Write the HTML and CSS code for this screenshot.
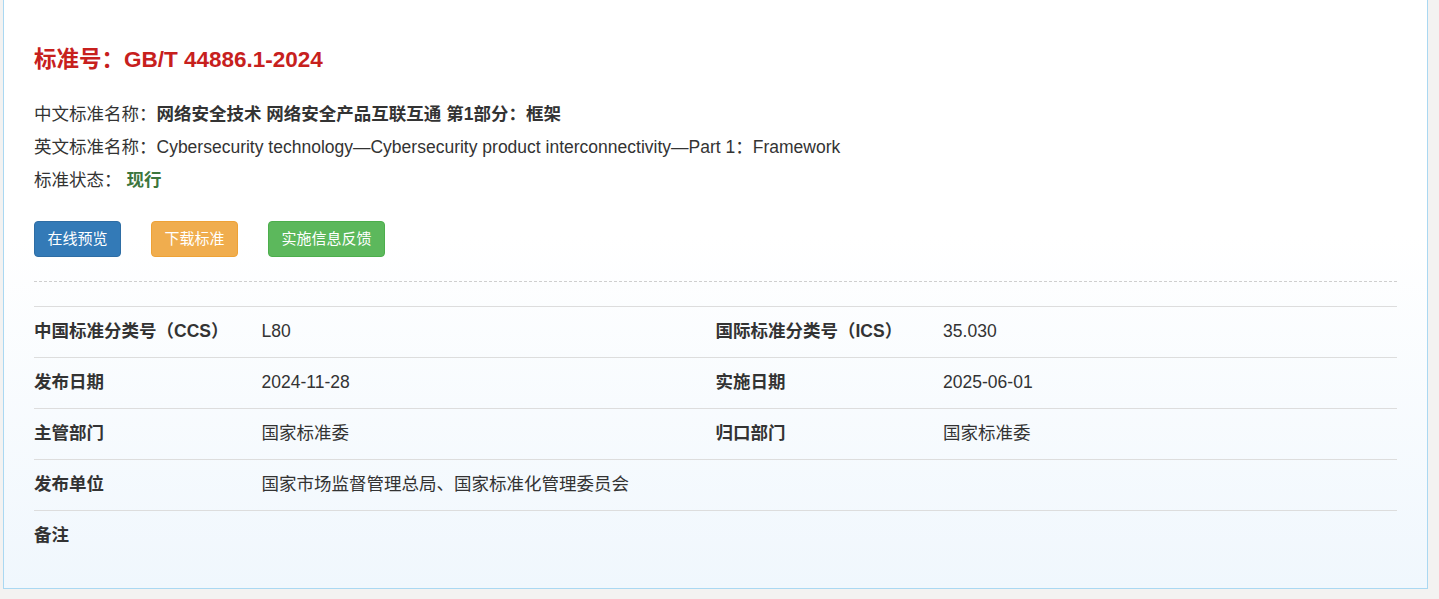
FILE: index.html
```html
<!DOCTYPE html>
<html lang="zh-CN">
<head>
<meta charset="utf-8">
<title>GB/T 44886.1-2024</title>
<link rel="stylesheet" href="styles.css">
</head>
<body>
<div class="page">
  <div class="panel">
    <h1 class="title">标准号：GB/T 44886.1-2024</h1>
    <div class="info">
      <div class="info-line">中文标准名称：<strong>网络安全技术 网络安全产品互联互通 第1部分：框架</strong></div>
      <div class="info-line">英文标准名称：Cybersecurity technology—Cybersecurity product interconnectivity—Part 1：Framework</div>
      <div class="info-line">标准状态：<span class="status">现行</span></div>
    </div>
    <div class="actions">
      <a class="btn btn-primary" href="#">在线预览</a>
      <a class="btn btn-warning" href="#">下载标准</a>
      <a class="btn btn-success" href="#">实施信息反馈</a>
    </div>
    <div class="divider"></div>
    <table class="detail">
      <colgroup>
        <col class="c-label"><col class="c-value"><col class="c-label"><col class="c-value">
      </colgroup>
      <tbody>
        <tr><th>中国标准分类号（CCS）</th><td>L80</td><th>国际标准分类号（ICS）</th><td>35.030</td></tr>
        <tr><th>发布日期</th><td>2024-11-28</td><th>实施日期</th><td>2025-06-01</td></tr>
        <tr><th>主管部门</th><td>国家标准委</td><th>归口部门</th><td>国家标准委</td></tr>
        <tr><th>发布单位</th><td colspan="3">国家市场监督管理总局、国家标准化管理委员会</td></tr>
        <tr><th>备注</th><td colspan="3"></td></tr>
      </tbody>
    </table>
  </div>
</div>
</body>
</html>
```

FILE: styles.css
```css
html, body {
  margin: 0;
  padding: 0;
}
body {
  background: #f3f2f1;
  font-family: "Liberation Sans", "Noto Sans CJK SC", sans-serif;
  color: #333;
  font-size: 17.5px;
}
.page {
  padding: 0 11px 10px 3px;
}
.panel {
  border: 1px solid #aad8f2;
  border-top: none;
  background: linear-gradient(to bottom, #ffffff 0%, #ffffff 40%, #f0f7fd 100%);
  padding: 0 30px 27px;
}
.title {
  margin: 0;
  padding-top: 44px;
  font-size: 22.5px;
  line-height: 32px;
  font-weight: bold;
  color: #c7201d;
}
.info {
  margin-top: 22px;
}
.info-line {
  line-height: 33px;
}
.info-line strong {
  font-weight: bold;
}
.status {
  margin-left: 5px;
  color: #3c763d;
  font-weight: bold;
}
.actions {
  margin-top: 24px;
  display: flex;
  gap: 30px;
}
.btn {
  display: inline-block;
  padding: 7px 12.5px;
  font-size: 15px;
  line-height: 20px;
  color: #fff;
  text-decoration: none;
  border: 1px solid transparent;
  border-radius: 4px;
}
.btn-primary { background: #337ab7; border-color: #2e6da4; }
.btn-warning { background: #f0ad4e; border-color: #eea236; }
.btn-success { background: #5cb85c; border-color: #4cae4c; }
.divider {
  margin-top: 24px;
  border-top: 1px dashed #cfcfcf;
}
.detail {
  margin-top: 24px;
  width: 100%;
  border-collapse: collapse;
  table-layout: fixed;
}
.c-label { width: 16.7%; }
.c-value { width: 33.3%; }
.detail th,
.detail td {
  border-top: 1px solid #ddd;
  padding: 12px 0 14px;
  line-height: 24px;
  text-align: left;
  vertical-align: middle;
}
.detail th {
  font-weight: bold;
}
.detail td {
  font-weight: normal;
}
```
